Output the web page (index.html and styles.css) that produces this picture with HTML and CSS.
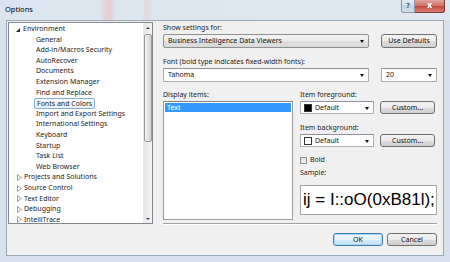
FILE: index.html
```html
<!DOCTYPE html>
<html>
<head>
<meta charset="UTF-8">
<title>Options</title>
<link rel="stylesheet" href="styles.css">
</head>
<body>
<div class="window">
  <div class="titlebar">
    <span class="title">Options</span>
    <div class="capbtns">
      <span class="cap help">?</span>
      <span class="cap close">x</span>
    </div>
  </div>

  <div class="client">
    <div class="main">

      <!-- left: options tree -->
      <div class="tree">
        <ul class="nodes">
          <li class="top"><i class="exp"></i>Environment</li>
          <li class="leaf">General</li>
          <li class="leaf">Add-in/Macros Security</li>
          <li class="leaf">AutoRecover</li>
          <li class="leaf">Documents</li>
          <li class="leaf">Extension Manager</li>
          <li class="leaf">Find and Replace</li>
          <li class="leaf"><span class="sel">Fonts and Colors</span></li>
          <li class="leaf">Import and Export Settings</li>
          <li class="leaf">International Settings</li>
          <li class="leaf">Keyboard</li>
          <li class="leaf">Startup</li>
          <li class="leaf">Task List</li>
          <li class="leaf">Web Browser</li>
          <li class="top"><svg class="col" width="5" height="7" viewBox="0 0 5 7"><polygon points="0.5,0.5 4.5,3.5 0.5,6.5" fill="#fff" stroke="#a0a0a0" stroke-width="1"/></svg>Projects and Solutions</li>
          <li class="top"><svg class="col" width="5" height="7" viewBox="0 0 5 7"><polygon points="0.5,0.5 4.5,3.5 0.5,6.5" fill="#fff" stroke="#a0a0a0" stroke-width="1"/></svg>Source Control</li>
          <li class="top"><svg class="col" width="5" height="7" viewBox="0 0 5 7"><polygon points="0.5,0.5 4.5,3.5 0.5,6.5" fill="#fff" stroke="#a0a0a0" stroke-width="1"/></svg>Text Editor</li>
          <li class="top"><svg class="col" width="5" height="7" viewBox="0 0 5 7"><polygon points="0.5,0.5 4.5,3.5 0.5,6.5" fill="#fff" stroke="#a0a0a0" stroke-width="1"/></svg>Debugging</li>
          <li class="top"><svg class="col" width="5" height="7" viewBox="0 0 5 7"><polygon points="0.5,0.5 4.5,3.5 0.5,6.5" fill="#fff" stroke="#a0a0a0" stroke-width="1"/></svg>IntelliTrace</li>
        </ul>
        <div class="vscroll">
          <span class="arr up"></span>
          <div class="track"><span class="thumb"></span></div>
          <span class="arr down"></span>
        </div>
      </div>

      <!-- right: settings -->
      <div class="settings">
        <div class="lbl">Show settings for:</div>
        <div class="row">
          <div class="combo list wide">Business Intelligence Data Viewers<i class="drop"></i></div>
          <div class="btn side">Use Defaults</div>
        </div>

        <div class="lbl gap">Font (bold type indicates fixed-width fonts):</div>
        <div class="row">
          <div class="combo wide">Tahoma<i class="drop"></i></div>
          <div class="combo side">20<i class="drop"></i></div>
        </div>

        <div class="lower">
          <div class="itemcol">
            <div class="lbl">Display items:</div>
            <div class="listbox">
              <div class="item on">Text</div>
            </div>
          </div>

          <div class="propcol">
            <div class="lbl">Item foreground:</div>
            <div class="row">
              <div class="combo color"><i class="swatch black"></i>Default<i class="drop"></i></div>
              <div class="btn custom">Custom...</div>
            </div>

            <div class="lbl gap">Item background:</div>
            <div class="row">
              <div class="combo color"><i class="swatch"></i>Default<i class="drop"></i></div>
              <div class="btn custom">Custom...</div>
            </div>

            <label class="check"><i class="box"></i>Bold</label>

            <div class="lbl sample-lbl">Sample:</div>
            <div class="sample">ij = I::oO(0xB81l);</div>
          </div>
        </div>

        <div class="sep"></div>
      </div>
    </div>

    <div class="buttons">
      <div class="btn dlg default">OK</div>
      <div class="btn dlg">Cancel</div>
    </div>
  </div>
</div>
</body>
</html>
```

FILE: styles.css
```css
*{
	margin:0;
	padding:0;
	box-sizing:border-box;
}

html,body{
	width:450px;
	height:262px;
	overflow:hidden;
}

body{
	font-family:"Noto Sans","DejaVu Sans",sans-serif;
	font-size:7px;
	color:#1b1b1b;
	background:#d6e0ea;
}

.window{
	width:450px;
	height:262px;
	display:flex;
	flex-direction:column;
	background:#d8e2ec;
}

/* title bar */
.titlebar{
	height:20px;
	display:flex;
	justify-content:space-between;
	align-items:flex-start;
	background:linear-gradient(90deg,#dbe5ef 0,#dde6ef 100px,#e8d2d9 105px,#e6cdd5 110px,#dde6ef 116px,#dde6ef 142px,#e5d7dd 147px,#dde6ef 153px,#dfe7f0 100%);
}

.title{
	font-size:7.5px;
	color:#000;
	margin:4px 0 0 5px;
	line-height:10px;
}

.capbtns{
	display:flex;
	margin-right:5px;
}

.cap{
	height:13px;
	line-height:12px;
	text-align:center;
	font-family:"DejaVu Sans",sans-serif;
	font-weight:bold;
}

.help{
	width:14px;
	font-size:7px;
	color:#50607a;
	border:1px solid #8a98aa;
	border-top:none;
	border-radius:0 0 0 3px;
	background:linear-gradient(#e4ecf5,#d0dcea 50%,#c2d1e2 51%,#d4e0ed);
}

.close{
	width:30px;
	font-size:8px;
	color:#fff;
	border:1px solid #7b3a33;
	border-top:none;
	border-left:none;
	border-radius:0 0 3px 0;
	background:linear-gradient(#e1a49c,#cf6f64 50%,#c0463a 51%,#d87f72);
}

/* client area */
.client{
	flex:1;
	margin:0 6px 6px 6px;
	border:1px solid #9aa7b6;
	background:#f0f0f0;
	display:flex;
	flex-direction:column;
}

.main{
	display:flex;
	padding-top:1px;
}

/* tree */
.tree{
	margin-left:1px;
	width:145px;
	height:202px;
	border:1px solid #828790;
	background:#fff;
	display:flex;
	overflow:hidden;
}

.nodes{
	flex:1;
	list-style:none;
	padding-top:1px;
	overflow:hidden;
}

.nodes li{
	height:10.6px;
	line-height:10.6px;
	white-space:nowrap;
	color:#1e1e1e;
	display:flex;
	align-items:center;
}

.nodes .top{
	padding-left:7px;
}

.nodes .leaf{
	padding-left:27px;
}

.exp{
	display:block;
	width:0;
	height:0;
	border-right:4px solid #262626;
	border-top:4px solid transparent;
	margin:1px 3px 0 0;
}

.col{
	display:block;
	margin:0 2px 0 1px;
}

.sel{
	display:block;
	height:10.6px;
	line-height:9px;
	padding:0 2px;
	margin-left:-2px;
	border:1px solid #84acdd;
	border-radius:2px;
	background:linear-gradient(#f6fafe,#e8f1fc);
}

.vscroll{
	width:9px;
	display:flex;
	flex-direction:column;
	background:linear-gradient(90deg,#e6e6e6,#f4f4f4);
	border-left:1px solid #e8e8e8;
}

.arr{
	height:9px;
	display:flex;
	align-items:center;
	justify-content:center;
}

.arr::after{
	content:"";
	width:0;
	height:0;
	border-left:2px solid transparent;
	border-right:2px solid transparent;
}

.up::after{
	border-bottom:2px solid #3a3a3a;
}

.down::after{
	border-top:2px solid #3a3a3a;
}

.track{
	flex:1;
	padding:2px 0 0 0;
}

.thumb{
	display:block;
	height:108px;
	border:1px solid #999;
	border-radius:2px;
	background:linear-gradient(90deg,#f4f4f4,#e2e2e2 50%,#d2d2d2);
}

/* settings */
.settings{
	margin-left:10px;
	width:274px;
}

.lbl{
	height:10px;
	line-height:10px;
	margin-top:1px;
	color:#1e1e1e;
	white-space:nowrap;
}

.lbl.gap{
	margin-top:9px;
}

.row{
	display:flex;
	justify-content:space-between;
	margin-top:1px;
}

.combo{
	position:relative;
	height:14px;
	line-height:12px;
	padding-left:4px;
	border:1px solid #abadb3;
	border-top-color:#8f9197;
	background:#fff;
	white-space:nowrap;
	color:#111;
}

.combo.list{
	border:1px solid #8e8f8f;
	border-radius:2px;
	background:linear-gradient(#f3f3f3,#ececec 50%,#e0e0e0 51%,#d9d9d9);
}

.wide{
	width:206px;
}

.side{
	width:56px;
}

.drop{
	position:absolute;
	right:4px;
	top:5px;
	width:0;
	height:0;
	border-left:2.5px solid transparent;
	border-right:2.5px solid transparent;
	border-top:3px solid #111;
}

.btn{
	height:14px;
	line-height:12px;
	text-align:center;
	border:1px solid #707070;
	border-radius:3px;
	background:linear-gradient(#f2f2f2,#ebebeb 50%,#dddddd 51%,#cfcfcf);
	color:#111;
	white-space:nowrap;
}

.lower{
	display:flex;
	margin-top:7px;
}

.itemcol{
	width:130px;
}

.listbox{
	margin-top:1px;
	height:119px;
	border:1px solid #9c9c9c;
	border-top-color:#828282;
	background:#fff;
	padding:1px;
}

.item{
	height:9px;
	line-height:9px;
	padding-left:2px;
}

.item.on{
	background:#3399ff;
	color:#fff;
}

.propcol{
	margin-left:7px;
	width:137px;
}

.combo.color{
	width:74px;
	height:13px;
	line-height:11px;
	padding-left:3px;
	display:flex;
	align-items:center;
}

.swatch{
	display:block;
	width:8px;
	height:8px;
	border:1px solid #333;
	background:#fff;
	margin-right:3px;
}

.swatch.black{
	background:#000;
}

.custom{
	width:55px;
	margin-right:2px;
	height:13px;
	line-height:11px;
}

.check{
	display:flex;
	align-items:center;
	margin-top:8px;
	height:10px;
	line-height:10px;
}

.box{
	display:block;
	width:7px;
	height:7px;
	border:1px solid #8f8f8f;
	background:linear-gradient(135deg,#dcdcdc,#f8f8f8);
	margin-right:3px;
}

.sample-lbl{
	margin-top:3px;
}

.sample{
	margin-top:7px;
	height:30px;
	border:1px solid #a5a5a5;
	background:#fff;
	font-family:"Liberation Sans",Arial,sans-serif;
	font-size:17px;
	line-height:28px;
	padding-left:2px;
	color:#000;
	white-space:nowrap;
	overflow:hidden;
}

.sep{
	margin-top:3px;
	height:2px;
	border-top:1px solid #a0a0a0;
	border-bottom:1px solid #fff;
}

/* dialog buttons */
.buttons{
	display:flex;
	justify-content:flex-end;
	gap:4px;
	margin-top:8px;
	padding-right:6px;
}

.dlg{
	width:50px;
	height:13px;
	line-height:11px;
}

.default{
	border-color:#3c7fb1;
	background:linear-gradient(#f2f9fd,#e3f2fb 50%,#d3eaf8 51%,#c8e3f5);
	box-shadow:inset 0 0 0 1px #a9d7f5;
}
```
